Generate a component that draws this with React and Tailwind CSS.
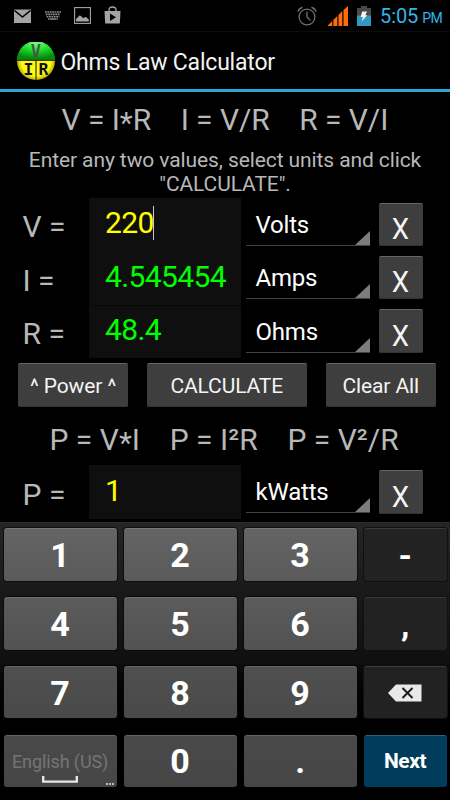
const star = <span className="relative top-[3px]">*</span>;

function StatusBar() {
  return (
    <div className="flex h-[32px] shrink-0 items-center border-b border-[#0c0c0c] bg-black">
      <svg className="ml-[14px]" width="17" height="14" viewBox="0 0 17 14">
        <rect width="17" height="14" y="0.5" fill="#a4a4a4" />
        <path d="M0.5 1.5 L8.5 8 L16.5 1.5" fill="none" stroke="#000" strokeWidth="1.6" />
      </svg>
      <svg className="ml-[14px]" width="16" height="9" viewBox="0 0 16 9" fill="none" stroke="#8d8d8d" strokeWidth="1.6">
        <path d="M0 1H16" strokeDasharray="1.8 0.6" />
        <path d="M0.8 3.4H15.2" strokeDasharray="1.8 0.6" />
        <path d="M1.6 5.8H14.4" strokeDasharray="1.8 0.6" />
        <path d="M3 8H13" strokeDasharray="1.6 0.5 6 0.5" />
      </svg>
      <svg className="ml-[13px]" width="17" height="17" viewBox="0 0 17 17">
        <rect x="0.6" y="0.6" width="15.8" height="15.8" fill="none" stroke="#a4a4a4" strokeWidth="1.1" />
        <path d="M2 14.5V12L5.5 8.5L7 9L9 11L12 10L14.8 12.5V14.5Z" fill="#a4a4a4" />
      </svg>
      <svg className="mb-[2px] ml-[13px]" width="17" height="18" viewBox="0 0 17 18">
        <path d="M5 5V4Q5 1 8.5 1Q12 1 12 4V5" fill="none" stroke="#a4a4a4" strokeWidth="1.3" />
        <path d="M0.5 5H16.5L15.8 17.5H1.2Z" fill="#a4a4a4" />
        <path d="M6 7.5L12 11.2L6 15Z" fill="#000" />
      </svg>
      <div className="flex-1" />
      <svg width="20" height="20" viewBox="0 0 20 20" fill="none" stroke="#707070" strokeWidth="1.3">
        <circle cx="10" cy="11" r="7.9" />
        <path d="M10 5.8V11L13.5 14.5" />
        <path d="M0.8 5.5Q2 2.3 5.5 1.2M14.5 1.2Q18 2.3 19.2 5.5" strokeWidth="1.5" />
      </svg>
      <svg className="ml-[11px]" width="20" height="20" viewBox="0 0 20 20">
        <path d="M0 20V19.3L4.3 15V20Z M5.4 20V14L9.3 10V20Z M10.5 20V9L14.3 5V20Z M15.5 20V4L20 0V20Z" fill="#ff6e0b" />
      </svg>
      <svg className="ml-[9px]" width="14" height="20" viewBox="0 0 14 20">
        <path d="M4 0H10V2H14V20H0V2H4Z" fill="#484848" />
        <rect y="9.5" width="14" height="10.5" fill="#3498bf" />
        <path d="M5.2 5.5H10L8.4 9.2H10.3L4.6 15.5L6 11H3.6Z" fill="#f4f4f4" />
      </svg>
      <div className="ml-[9px] w-[70px] whitespace-nowrap pt-[2px] text-[20px] leading-[32px] text-[#33b5e5]">
        <span className="tracking-[-0.1px]">5:05</span>
        <span className="ml-[4px] text-[14px] tracking-[-0.4px]">PM</span>
      </div>
    </div>
  );
}

function AppLogo() {
  return (
    <svg width="38" height="38" viewBox="0 0 38 38">
      <defs>
        <radialGradient id="lg" cx="0.5" cy="0.1" r="0.8">
          <stop offset="0" stopColor="#7dfb8a" />
          <stop offset="0.5" stopColor="#1fdc2b" />
          <stop offset="1" stopColor="#058a10" />
        </radialGradient>
        <radialGradient id="ly" cx="0.5" cy="0.5" r="0.52">
          <stop offset="0.75" stopColor="#fdf714" />
          <stop offset="1" stopColor="#a8a000" />
        </radialGradient>
      </defs>
      <circle cx="19" cy="19" r="19" fill="url(#ly)" />
      <path d="M0 18A19 19 0 0 1 38 18Z" fill="url(#lg)" />
      <path d="M0 18.3H38M19 18V38" stroke="#141400" strokeWidth="1" />
      <g fontFamily="DejaVu Sans Mono" fontWeight="bold" textAnchor="middle">
        <text x="18.8" y="15" fontSize="17" fill="#47564d">V</text>
        <text x="11.5" y="33" fontSize="16.5" fill="#10101c">I</text>
        <text x="26.5" y="33" fontSize="16.5" fill="#10101c">R</text>
      </g>
    </svg>
  );
}

function Button({ className, children }) {
  return (
    <div className={"flex items-center justify-center whitespace-nowrap rounded-[2px] border-t border-[#656565] bg-[#3e3e3e] text-[#f4f4f4] shadow-[inset_0_-1px_0_#333] " + className}>
      {children}
    </div>
  );
}

function Row({ label, value, unit, yellow, cursor, divider }) {
  return (
    <div className="flex h-[53.3px] shrink-0">
      <div className="w-[89px] whitespace-pre pl-[22.5px] pt-[2.3px] text-[30px] leading-[53px] text-[#b8b8b8]">{label} =</div>
      <div className={"flex w-[152px] items-center bg-[#0f0f0f] pb-[3.6px] pl-[16px] text-[30px] leading-[49px] " + (yellow ? "text-[#ffff00]" : "text-[#00ff00]") + (divider ? " border-t border-[#080808]" : "")}>
        <span className="tracking-[-0.6px]">{value}</span>
        {cursor && <span className="-ml-[0.5px] h-[34px] w-px bg-[#c9c9c9]" />}
      </div>
      <div className="ml-[4.5px] mt-[4px] flex h-[44px] w-[124.5px] border-b border-[#444]">
        <span className="flex-1 pl-[10px] text-[24px] leading-[46px] tracking-[-0.2px] text-white">{unit}</span>
        <svg className="self-end" width="15" height="14" viewBox="0 0 15 14">
          <path d="M15 0V14H0Z" fill="#7c7c7c" />
        </svg>
      </div>
      <Button className="ml-[8.5px] mt-[4.7px] h-[43.5px] w-[44px] pt-[8.5px] text-[30px] leading-[34px]">
        <span className="scale-x-[0.92]">X</span>
      </Button>
    </div>
  );
}

function Key({ children, className }) {
  return (
    <div className={"flex h-[52.5px] items-center justify-center rounded-[3px] text-[34px] font-bold leading-[52px] text-white " + className}>
      {children}
    </div>
  );
}

const r1 = "border-t border-[#777] bg-linear-to-b from-[#646464] to-[#5a5a5a] shadow-[0_0_0_1px_#0d0d0d]";
const r2 = "border-t border-[#6f6f6f] bg-linear-to-b from-[#5b5b5b] to-[#525252] shadow-[0_0_0_1px_#0a0a0a]";
const r3 = "border-t border-[#686868] bg-linear-to-b from-[#505050] to-[#494949] shadow-[0_0_0_1px_#060606]";
const r4 = "border-t border-[#646464] bg-linear-to-b from-[#494949] to-[#464646] shadow-[0_0_0_1px_#020202]";
const dk = "border-t border-[#3c3c3c] bg-[#222] shadow-[0_0_0_1px_#101010]";

function Keyboard() {
  return (
    <div className="grid flex-1 grid-cols-[113px_113px_113px_83px] content-start gap-x-[7px] gap-y-[16.3px] border-t border-[#2c2c2c] bg-linear-to-b from-[#252525] via-[#0f0f0f] via-50% to-black to-75% pl-[3.6px] pt-[5.6px]">
      <Key className={r1}>1</Key>
      <Key className={r1}>2</Key>
      <Key className={r1}>3</Key>
      <Key className={dk}>-</Key>
      <Key className={r2}>4</Key>
      <Key className={r2}>5</Key>
      <Key className={r2}>6</Key>
      <Key className={dk}>,</Key>
      <Key className={r3}>7</Key>
      <Key className={r3}>8</Key>
      <Key className={r3}>9</Key>
      <Key className={dk}>
        <svg width="34" height="18" viewBox="0 0 34 18">
          <path d="M0 9L8 0.5H33.5V17.5H8Z" fill="#e9e9e9" />
          <path d="M14.5 4L24.5 14M24.5 4L14.5 14" stroke="#1c1c1c" strokeWidth="2" />
        </svg>
      </Key>
      <div className={"relative flex h-[52.5px] justify-center whitespace-nowrap rounded-[3px] text-[18px] leading-[51px] text-[#757575] " + r4}>
        <span className="tracking-[-0.1px]">English (US)</span>
        <svg className="absolute bottom-[4.5px] left-[38.5px]" width="36" height="7" viewBox="0 0 36 7">
          <path d="M1.2 0V5.6H34.8V0" fill="none" stroke="#e6e6e6" strokeWidth="2.4" />
        </svg>
        <svg className="absolute bottom-[2px] right-[3px]" width="8" height="2" viewBox="0 0 8 2">
          <path d="M0 1H8" stroke="#bbb" strokeWidth="2" strokeDasharray="2 1" />
        </svg>
      </div>
      <Key className={r4}>0</Key>
      <Key className={r4}>.</Key>
      <Key className="border-t border-[#2a5f7e] bg-[#003c5c]">
        <span className="text-[21px] tracking-[-0.4px]">Next</span>
      </Key>
    </div>
  );
}

export default function App() {
  return (
    <div className="flex h-[800px] w-[450px] flex-col overflow-hidden bg-black font-[Roboto,sans-serif]">
      <StatusBar />
      <div className="flex h-[60px] shrink-0 items-center border-b-[3px] border-[#2ba6d9] pl-[16.5px]">
        <AppLogo />
        <span className="ml-[6px] pt-[4px] text-[23px] leading-[53px] tracking-[-0.2px] text-[#f3f3f3]">Ohms Law Calculator</span>
      </div>
      <div className="h-[55px] shrink-0 whitespace-pre pl-[61.5px] text-[30px] leading-[55px] tracking-[-0.06px] text-[#b8b8b8]">
        V = I{star}R    I = V/R    R = V/I
      </div>
      <div className="h-[51px] shrink-0 pt-[0.5px] text-center text-[21px] leading-[24.4px] tracking-[-0.1px] text-[#b8b8b8]">
        Enter any two values, select units and click
        <br />
        "CALCULATE".
      </div>
      <Row label="V" value="220" unit="Volts" yellow cursor />
      <Row label="I" value="4.545454" unit="Amps" />
      <Row label="R" value="48.4" unit="Ohms" divider />
      <div className="flex h-[54px] shrink-0 pl-[18px] pt-[5.3px] text-[21px] tracking-[-0.1px]">
        <Button className="h-[43.5px] w-[110px] pt-[2.5px]">^ Power ^</Button>
        <Button className="ml-[19px] h-[43.5px] w-[159.5px] pt-[2.5px]">CALCULATE</Button>
        <Button className="ml-[19px] h-[43.5px] w-[110.5px] pt-[2.5px]">Clear All</Button>
      </div>
      <div className="h-[53.5px] shrink-0 whitespace-pre pl-[49.5px] text-[30px] leading-[55px] text-[#b8b8b8]">
        P = V{star}I    P = I²R    P = V²/R
      </div>
      <Row label="P" value="1" unit="kWatts" yellow />
      <div className="h-[3px] shrink-0" />
      <Keyboard />
    </div>
  );
}
